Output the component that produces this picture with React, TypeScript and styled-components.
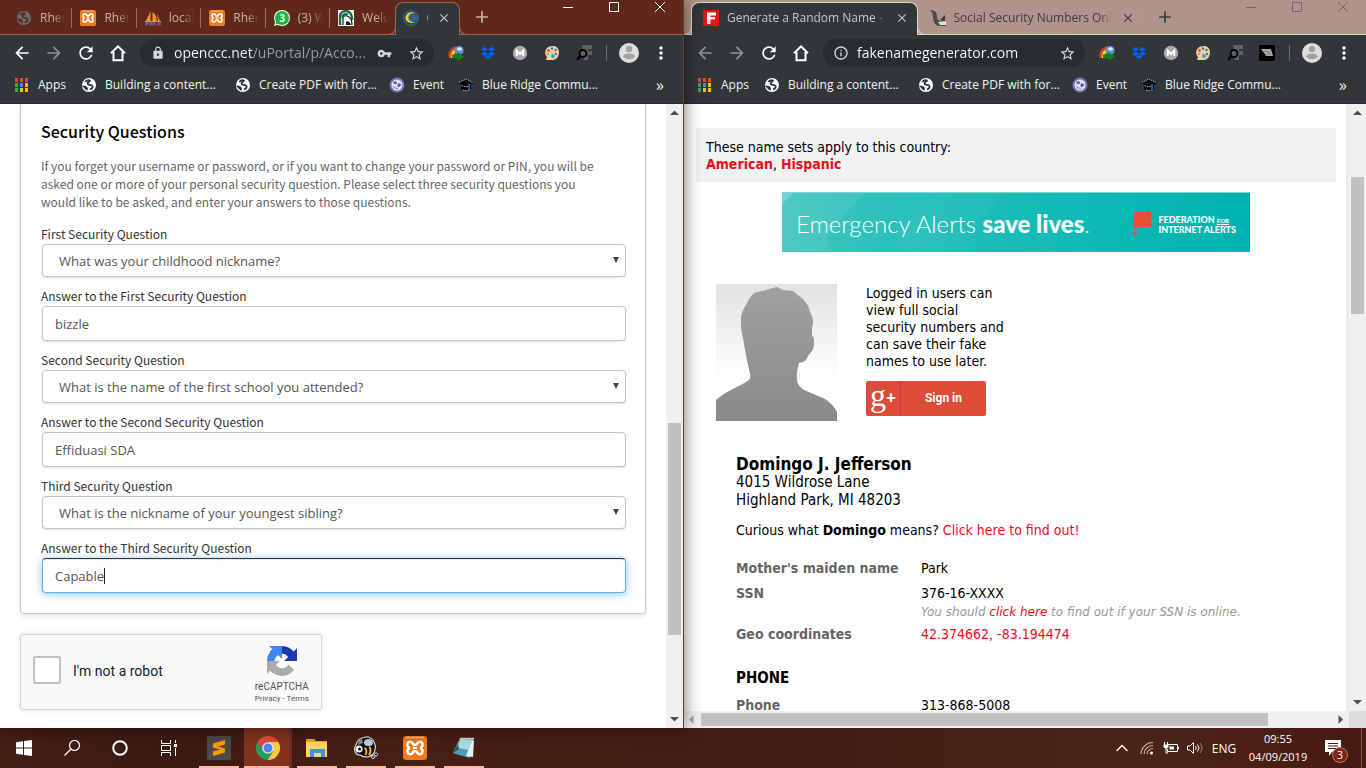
import React, { ReactNode, useId } from "react";
import styled, { createGlobalStyle, css } from "styled-components";
import {
  MdAdd,
  MdArrowBack,
  MdArrowForward,
  MdClose,
  MdInfoOutline,
  MdLock,
  MdMoreVert,
  MdRefresh,
  MdStarBorder,
  MdVpnKey,
} from "react-icons/md";
import { FaDropbox } from "react-icons/fa";

const ui = `"Open Sans", "Noto Sans", sans-serif`;
const source = `"Noto Sans CJK SC", "Noto Sans", sans-serif`;
const tahoma = `"DejaVu Sans Condensed", "DejaVu Sans", sans-serif`;
const toolbarColor = "#323639";

const GlobalStyle = createGlobalStyle`
  *, *::before, *::after { box-sizing: border-box; }
  body { margin: 0; background: #fff; overflow: hidden; }
  button, input, select { font: inherit; color: inherit; margin: 0; padding: 0; border: 0; background: none; outline: 0; }
  a { color: inherit; text-decoration: none; }
  h1, h2, h3, p, dl, dd { margin: 0; }
  svg { display: block; flex: none; }
`;

/* ---------- desktop and windows ---------- */

const Desktop = styled.div`
  height: 100vh;
  display: flex;
  flex-direction: column;
  font-family: ${ui};
`;

const Windows = styled.div`
  flex: 1;
  min-height: 0;
  display: grid;
  grid-template-columns: minmax(0, 684fr) minmax(0, 682fr);
`;

const Window = styled.section<{ $front?: boolean }>`
  display: flex;
  flex-direction: column;
  min-width: 0;
  min-height: 0;
  background: #fff;
  ${(p) =>
    p.$front &&
    css`
      position: relative;
      z-index: 1;
      border-right: 1px solid #6b3a2e;
      box-shadow: 0 0 16px rgba(0, 0, 0, 0.55);
    `}
`;

const TabStrip = styled.div<{ $front?: boolean }>`
  display: flex;
  align-items: flex-start;
  height: 35px;
  flex: none;
  padding-left: ${(p) => (p.$front ? 8 : 7)}px;
  background: ${(p) => (p.$front ? "#5f281a" : "#b0948b")};
  border-bottom: 1px solid ${(p) => (p.$front ? "#96685b" : "#e0d3cf")};
  color: ${(p) => (p.$front ? "#c9b3ac" : "#3c3c3e")};
  --line: ${(p) => (p.$front ? "#96685b" : "#e0d3cf")};
  --inset: ${(p) => (p.$front ? 8 : 12)}px;
`;

const TabList = styled.div`
  flex: 0 1 452px;
  display: flex;
  min-width: 0;
`;

const Tab = styled.div<{ $active?: boolean; $last?: boolean }>`
  position: relative;
  flex: 1 1 0;
  min-width: 0;
  display: flex;
  align-items: center;
  gap: 8px;
  height: 33px;
  margin-top: 2px;
  padding: 0 7px 2px var(--inset);
  font-size: 12px;
  ${(p) =>
    p.$active
      ? css`
          padding: 0 7px 2px calc(var(--inset) - 1px);
          background: ${toolbarColor};
          border: 1px solid var(--line);
          border-bottom: 0;
          border-radius: 8px 8px 0 0;
          color: #c4c7ca;
          &::before,
          &::after {
            content: "";
            position: absolute;
            bottom: 0;
            width: 8px;
            height: 8px;
            border-bottom: 1px solid var(--line);
          }
          &::before {
            left: -8px;
            border-right: 1px solid var(--line);
            border-bottom-right-radius: 8px;
          }
          &::after {
            right: -8px;
            border-left: 1px solid var(--line);
            border-bottom-left-radius: 8px;
          }
        `
      : css`
          &::after {
            content: "";
            position: absolute;
            right: 0;
            top: 6px;
            height: 20px;
            border-right: ${p.$last ? 0 : 1}px solid rgba(190, 150, 138, 0.6);
          }
        `}
`;

const TabTitle = styled.button<{ $short?: boolean }>`
  flex: 1;
  min-width: 0;
  overflow: hidden;
  white-space: nowrap;
  text-align: left;
  line-height: 18px;
  ${(p) =>
    !p.$short &&
    css`
      -webkit-mask-image: linear-gradient(90deg, #000 calc(100% - 12px), transparent);
      mask-image: linear-gradient(90deg, #000 calc(100% - 12px), transparent);
    `}
`;

const IconButton = styled.button<{ $w?: number; $h?: number; $dim?: boolean }>`
  display: flex;
  align-items: center;
  justify-content: center;
  flex: none;
  width: ${(p) => p.$w ?? 32}px;
  height: ${(p) => p.$h ?? 28}px;
  opacity: ${(p) => (p.$dim ? 0.45 : 1)};
`;

const Divider = styled.span`
  flex: none;
  width: 1px;
  height: 16px;
  background: #6b6f73;
  margin: 0 6px;
`;

const WindowControls = styled.div<{ $front?: boolean }>`
  display: flex;
  margin-left: auto;
  color: ${(p) => (p.$front ? "#fff" : "#7a6660")};
`;

const Toolbar = styled.div<{ $front?: boolean }>`
  flex: none;
  display: flex;
  align-items: center;
  height: 36px;
  padding: 0 6px 0 ${(p) => (p.$front ? 6 : 5)}px;
  background: ${toolbarColor};
  color: #fff;
`;

const Omnibox = styled.div`
  flex: 1;
  min-width: 0;
  display: flex;
  align-items: center;
  height: 28px;
  margin: 0 6px;
  padding: 0 2px 0 8px;
  border-radius: 14px;
  background: #282c2f;
  color: #d5d8db;
`;

const AddressInput = styled.input<{ $host: number }>`
  flex: 1;
  min-width: 0;
  margin-left: 6px;
  font-size: 14px;
  line-height: 20px;
  color: transparent;
  background: linear-gradient(90deg, #fff ${(p) => p.$host}px, #9aa0a6 ${(p) => p.$host}px);
  -webkit-background-clip: text;
  background-clip: text;
`;

const BookmarkBar = styled.nav<{ $front?: boolean }>`
  flex: none;
  display: flex;
  align-items: center;
  height: 33px;
  padding: 0 14px 5px ${(p) => (p.$front ? 14 : 13)}px;
  background: ${toolbarColor};
  border-bottom: 1px solid #26282b;
  color: #f1f3f4;
  font-size: 12px;
`;

const Bookmark = styled.a<{ $w: number }>`
  flex: 0 1 ${(p) => p.$w}px;
  display: flex;
  align-items: center;
  gap: 8px;
  white-space: nowrap;
  line-height: 18px;
`;

const Viewport = styled.div`
  flex: 1;
  min-height: 0;
  display: flex;
`;

/* ---------- scroll bars ---------- */

const Track = styled.div<{ $row?: boolean }>`
  flex: none;
  display: flex;
  flex-direction: ${(p) => (p.$row ? "row" : "column")};
  ${(p) => (p.$row ? "height: 17px;" : "width: 17px;")}
  background: #f0f0f0;
  color: #505050;
`;

const Space = styled.span<{ $n: number; $thumb?: boolean; $row?: boolean }>`
  flex: ${(p) => p.$n} 1 0;
  ${(p) =>
    p.$thumb &&
    css`
      background: #c1c1c1;
      margin: ${p.$row ? "2px 0" : "0 2px"};
    `}
`;

const arrows = {
  up: "M4 11h9L8.500 6.500z",
  down: "M4 6h9l-4.500 4.500z",
  left: "M9.500 4v9L5 8.500z",
  right: "M6.500 4v9L11 8.500z",
};

function Arrow({ dir }: { dir: keyof typeof arrows }) {
  return (
    <IconButton $w={17} $h={17} aria-label={`Scroll ${dir}`} $dim={dir === "left"}>
      <svg width="17" height="17">
        <path d={arrows[dir]} fill="currentColor" />
      </svg>
    </IconButton>
  );
}

function ScrollBar({ parts, row }: { parts: [number, number, number]; row?: boolean }) {
  return (
    <Track $row={row}>
      <Arrow dir={row ? "left" : "up"} />
      <Space $n={parts[0]} />
      <Space $n={parts[1]} $thumb $row={row} />
      <Space $n={parts[2]} />
      <Arrow dir={row ? "right" : "down"} />
    </Track>
  );
}

/* ---------- icons ---------- */

const Globe = ({ color = "#fff", ink = toolbarColor }) => (
  <svg width="16" height="16" viewBox="0 0 16 16">
    <circle cx="8" cy="8" r="7" fill={color} />
    <path
      d="M4.200 5C5.500 3.500 7.500 3 9 3.500 8.500 5 6.500 5 6.500 6.500S9 7.500 11 8.500c1.500 1 .500 3-2 4"
      fill="none"
      stroke={ink}
      strokeWidth="1.800"
    />
    <path d="M1.500 8.500L5 9l2 2-.500 2.500-1.500 1C3 13.500 1.500 11.500 1.500 8.500z" fill={ink} />
    <path d="M2 10.500a6.600 6.600 0 0 0 4 3.800" fill="none" stroke={color} strokeWidth="1.400" />
  </svg>
);

const Xampp = ({ size = 16 }) => (
  <svg width={size} height={size} viewBox="0 0 24 24">
    <rect width="24" height="24" rx="3" fill="#f07a1f" />
    <path d="M3 1.500h18" stroke="#f9b27a" strokeWidth="1.500" />
    <path
      d="M9 6.500C6 4.500 4 7 4.500 9.500c.300 1.200 1.500 1.500 1.500 2.500s-1.500 1.500-1.500 3C4.500 18 7 19 9 17.500c1-.900 1-2.500 3-2.500s2 1.600 3 2.500c2 1.500 4.500.500 4.500-2.500 0-1.500-1.500-2-1.500-3s1.200-1.300 1.500-2.500C20 7 18 4.500 15 6.500c-1 .900-1 2.500-3 2.500s-2-1.600-3-2.500z"
      fill="none"
      stroke="#fff"
      strokeWidth="2.600"
    />
    <path d="M10 12h4" stroke="#fff" strokeWidth="2" />
  </svg>
);

const PhpMyAdmin = () => (
  <svg width="16" height="16" viewBox="0 0 16 16">
    <path d="M5.500 1L1 11h4.500zM7.500 2v9h4c.300-4-1-7-4-9zM12 4l3 7h-2z" fill="#f5921e" />
    <path d="M0 11.500h16" stroke="#e8b98a" strokeWidth=".800" />
    <path d="M1 15.500V12h2v2H1m4 1.500V12m0 2h2m0-2v3.500M9 12v3.500M9 14h2m2-2v3.500m2-3.500v3.500" fill="none" stroke="#7f79b5" />
  </svg>
);

const WhatsApp = () => (
  <svg width="16" height="16" viewBox="0 0 16 16">
    <circle cx="8" cy="8" r="8" fill="#fff" />
    <path d="M0 16l1.500-5L5 14.500z" fill="#fff" />
    <circle cx="8" cy="8" r="7" fill="#12b83f" />
    <path d="M1.500 14.500l1-4 3 3z" fill="#12b83f" />
    <text x="8" y="11.500" textAnchor="middle" fontSize="10" fontWeight="700" fill="#fff">
      3
    </text>
  </svg>
);

const Portal = () => (
  <svg width="16" height="16" viewBox="0 0 16 16">
    <rect width="16" height="16" fill="#fff" />
    <path d="M2 15V6c0-3 3-5 6-5 4 0 6 4 6 8v1" fill="none" stroke="#1d6b4e" strokeWidth="2.400" />
    <path d="M5 15V8c0-2 2-3 4-2 3 1 5 4 5 9" fill="none" stroke="#151515" strokeWidth="1.200" />
    <path d="M3 6c2-3 5-4 8-2L8 6C6 6 5 7 4.500 9z" fill="#1d6b4e" />
    <path d="M8 15v-3c2-2 4 0 5 3z" fill="#111" />
  </svg>
);

const CccLogo = () => (
  <svg width="16" height="16" viewBox="0 0 16 16">
    <circle cx="8" cy="8" r="7.500" fill="#1c4a70" stroke="#2c6f8f" />
    <path d="M6.500 6h8M6 8h9M7 10h7" stroke="#5e8fb5" strokeWidth=".800" />
    <path d="M12.500 4C9.500 1 3.500 2 2.500 7c-.500 5 5 7.500 10 5-4 .500-7-1.500-7-4.500 0-3 3-4.800 7-3.500z" fill="#f5cf1c" />
  </svg>
);

const FngLogo = () => (
  <svg width="16" height="16" viewBox="0 0 16 16">
    <rect width="16" height="16" fill="#ed1010" />
    <path d="M4 2.500h9v3H7.500V7H12v2.500H7.500V14H4z" fill="#fff" />
  </svg>
);

const EagleLogo = () => (
  <svg width="16" height="16" viewBox="0 0 16 16">
    <path d="M0 0c4 0 7 2 7 6 0 3 1 4 3 5l6-1v6H8C4 14 3 10 3 7 3 4 2 2 0 0z" fill="#4c4c50" />
    <path d="M10 10l5-5v5l-2 1z" fill="#3a3a3e" />
    <path d="M8 12l8-1v4h-6z" fill="#e4dcda" />
  </svg>
);

const HomeIcon = () => (
  <svg width="18" height="18" viewBox="0 0 18 18">
    <path d="M4.500 8v8.200h9V8M2 9.300L9 2.400l7 6.900" fill="none" stroke="#fff" strokeWidth="2" />
  </svg>
);

const IdmIcon = () => (
  <svg width="16" height="16" viewBox="0 0 16 16">
    <path d="M1 13C-1 8 2 3 8 1v4.500C5 6.500 4 9 4.500 13z" fill="#d93a22" />
    <path d="M3 13C2 9 4 5 8.500 4V7.500C6 8.500 5.500 10 6 13z" fill="#f6d322" />
    <circle cx="11" cy="5.500" r="4.600" fill="#5b93da" />
    <ellipse cx="11.500" cy="4" rx="2.500" ry="1.800" fill="#d8ecff" />
    <path d="M3.500 9.500H9V7l7 4.500-6.500 4.500v-2.500h-5z" fill="#167d1c" />
  </svg>
);

const MIcon = () => (
  <svg width="16" height="16" viewBox="0 0 16 16">
    <circle cx="8" cy="8" r="7.200" fill="#a9a9a9" />
    <path d="M4.700 11V5.500L8 9l3.300-3.500V11" fill="none" stroke="#fff" strokeWidth="2" />
  </svg>
);

const PaletteIcon = () => (
  <svg width="16" height="16" viewBox="0 0 16 16">
    <path d="M8 1C12 .500 15 3 15 7.500S12 15 9 15H2l1-3C1.500 10.500 1 9 1.200 7 1.500 3.500 4.500 1.300 8 1z" fill="#ecd0a6" />
    <circle cx="4.500" cy="5.500" r="1.300" fill="#d13b2e" />
    <circle cx="8" cy="3.500" r="1.200" fill="#3d68c9" />
    <circle cx="11.500" cy="5" r="1.300" fill="#3a9a49" />
    <circle cx="12" cy="9" r="1.200" fill="#9a4eb2" />
    <circle cx="9" cy="11" r="2" fill="#1fb0d8" />
    <circle cx="4" cy="9" r="1.200" fill="#f0922d" />
  </svg>
);

const LensIcon = () => (
  <svg width="18" height="16" viewBox="0 0 18 16">
    <path d="M7 0h10v4h-4v2h4v4h-4v5H9z" fill="#606264" />
    <circle cx="8" cy="8.500" r="3.500" fill="#606264" stroke="#050505" strokeWidth="2" />
    <path d="M5.500 11L2 15" stroke="#050505" strokeWidth="2.400" />
  </svg>
);

const EagleTile = () => (
  <svg width="16" height="16" viewBox="0 0 16 16">
    <rect width="16" height="16" rx="1" fill="#000" />
    <path d="M2 4h10l2 7H7L5 8z" fill="#a6a6a6" />
    <path d="M4 6l7 1.500M7 9l5 .500" stroke="#777" strokeWidth=".700" />
  </svg>
);

const Profile = () => (
  <svg width="20" height="20" viewBox="0 0 20 20">
    <circle cx="10" cy="10" r="10" fill="#dedede" />
    <circle cx="10" cy="6" r="3.200" fill="#a2a2a2" />
    <ellipse cx="10" cy="13.300" rx="5.800" ry="2.900" fill="#a2a2a2" />
  </svg>
);

const appColors = ["#ea4335", "#ea4335", "#ea4335", "#34a853", "#4285f4", "#fbbc04", "#34a853", "#fbbc04", "#fbbc04"];
const AppsIcon = () => (
  <svg width="16" height="16" viewBox="0 0 16 16">
    {appColors.map((c, i) => (
      <rect key={i} x={1 + (i % 3) * 5} y={1 + Math.floor(i / 3) * 5} width="3" height="4" fill={c} />
    ))}
  </svg>
);

const EventIcon = () => (
  <svg width="16" height="16" viewBox="0 0 16 16">
    <circle cx="8" cy="8" r="6.500" fill="#e4e2f4" stroke="#7673bd" strokeWidth="2" />
    <path d="M4 5.500l3-1 1 1.500-2 1zM9.500 6.500l2.500 1-2 2.500-1.500-1z" fill="#5552a0" stroke="#5552a0" strokeWidth=".600" />
    <path d="M4 9l2 2 3 .500" stroke="#7673bd" fill="none" />
  </svg>
);

const CapIcon = () => (
  <svg width="16" height="16" viewBox="0 0 16 16">
    <path d="M8 2l8 4-3 1.600V12c-3 2-7 2-10 0V7.600L0 6z" fill="#050505" />
    <path d="M1 5.500L8 2l7 3.500M3.500 8.500C6 10 9 10 11 9M5 13c2 1 4 1 6 0" fill="none" stroke="#e8e8e8" strokeDasharray="1.500 1" strokeWidth=".800" />
    <path d="M11 7v7" stroke="#1a72bd" strokeWidth="1.600" />
  </svg>
);

/* ---------- browser chrome ---------- */

type TabInfo = { title: string; icon: ReactNode; active?: boolean; closable?: boolean };

function Tabs({ tabs, front }: { tabs: TabInfo[]; front?: boolean }) {
  return (
    <TabStrip $front={front}>
      <TabList>
        {tabs.map((t, i) => (
          <Tab key={i} $active={t.active} $last={tabs[i + 1]?.active}>
            {t.icon}
            <TabTitle $short={t.title.length < 2}>{t.title}</TabTitle>
            {t.closable && (
              <IconButton $w={16} $h={16} aria-label="Close tab">
                <MdClose size={14} />
              </IconButton>
            )}
          </Tab>
        ))}
      </TabList>
      <IconButton $w={44} $h={34} aria-label="New tab">
        <MdAdd size={20} />
      </IconButton>
      <WindowControls $front={front}>
        <IconButton $w={46} $h={14} aria-label="Minimize">
          <svg width="10" height="10">
            <path d="M0 5.500h10" stroke="currentColor" />
          </svg>
        </IconButton>
        <IconButton $w={46} $h={14} aria-label="Maximize">
          <svg width="10" height="10">
            <path d="M.500 .500h9v9h-9z" stroke="currentColor" fill="none" />
          </svg>
        </IconButton>
        <IconButton $w={46} $h={14} aria-label="Close">
          <svg width="10" height="10">
            <path d="M0 0l10 10M10 0L0 10" stroke="currentColor" />
          </svg>
        </IconButton>
      </WindowControls>
    </TabStrip>
  );
}

function Nav({ front, url, host }: { front?: boolean; url: string; host: number }) {
  return (
    <Toolbar $front={front}>
      <IconButton aria-label="Back" $dim={!front}>
        <MdArrowBack size={20} />
      </IconButton>
      <IconButton aria-label="Forward" $dim>
        <MdArrowForward size={20} />
      </IconButton>
      <IconButton aria-label="Reload">
        <MdRefresh size={20} />
      </IconButton>
      <IconButton aria-label="Home">
        <HomeIcon />
      </IconButton>
      <Omnibox>
        <IconButton $w={20} aria-label="Site information">
          {front ? <MdLock size={14} /> : <MdInfoOutline size={16} />}
        </IconButton>
        <AddressInput aria-label="Address" defaultValue={url} $host={host} />
        {front && (
          <IconButton aria-label="Saved password">
            <MdVpnKey size={15} />
          </IconButton>
        )}
        <IconButton aria-label="Bookmark this page">
          <MdStarBorder size={17} />
        </IconButton>
      </Omnibox>
      <IconButton aria-label="Download manager">
        <IdmIcon />
      </IconButton>
      <IconButton aria-label="Dropbox">
        <FaDropbox size={14} color="#0061fe" />
      </IconButton>
      <IconButton aria-label="Mail">
        <MIcon />
      </IconButton>
      <IconButton aria-label="Palette">
        <PaletteIcon />
      </IconButton>
      <IconButton aria-label="Finder">
        <LensIcon />
      </IconButton>
      {!front && (
        <IconButton aria-label="Eagle">
          <EagleTile />
        </IconButton>
      )}
      <Divider />
      <IconButton aria-label="Profile">
        <Profile />
      </IconButton>
      <IconButton aria-label="Menu">
        <MdMoreVert size={20} />
      </IconButton>
    </Toolbar>
  );
}

const Overflow = styled.button`
  margin-left: auto;
  width: 18px;
  font-size: 16px;
  line-height: 18px;
`;

function Bookmarks({ front }: { front?: boolean }) {
  return (
    <BookmarkBar $front={front} aria-label="Bookmarks">
      <Bookmark href="#" $w={67}>
        <AppsIcon />
        Apps
      </Bookmark>
      <Bookmark href="#" $w={154}>
        <Globe />
        Building a content...
      </Bookmark>
      <Bookmark href="#" $w={154}>
        <Globe />
        Create PDF with for...
      </Bookmark>
      <Bookmark href="#" $w={69}>
        <EventIcon />
        Event
      </Bookmark>
      <Bookmark href="#" $w={150}>
        <CapIcon />
        Blue Ridge Commu...
      </Bookmark>
      <Overflow aria-label="More bookmarks">»</Overflow>
    </BookmarkBar>
  );
}

/* ---------- account form page ---------- */

const FormPage = styled.main`
  flex: 1;
  min-width: 0;
  overflow: hidden;
  padding: 0 20px;
  font-family: ${source};
`;

const Card = styled.form`
  padding: 15px 19px 20px 20px;
  border: 1px solid #c8c8c8;
  border-top: 0;
  border-radius: 0 0 4px 4px;
  box-shadow: 0 2px 4px rgba(0, 0, 0, 0.12);
`;

const CardTitle = styled.h1`
  font-size: 16px;
  font-weight: 500;
  line-height: 24px;
  color: #000;
`;

const Intro = styled.p`
  margin: 14px 0 14px;
  font-size: 12px;
  line-height: 18px;
  color: #666;
`;

const Field = styled.div`
  & + & {
    margin-top: 10px;
  }
`;

const Label = styled.label`
  display: block;
  margin-bottom: 1px;
  font-size: 12px;
  line-height: 18px;
  color: #333;
`;

const boxStyle = css`
  width: 100%;
  border: 1px solid #c4c4c4;
  border-radius: 4px;
  box-shadow: 0 1px 2px rgba(0, 0, 0, 0.12);
  background: #fff;
  font-family: ${ui};
  font-size: 13px;
  color: #555;
`;

const SelectWrap = styled.div`
  position: relative;
  padding-left: 1px;
  &::after {
    content: "";
    position: absolute;
    right: 7px;
    top: 13px;
    border: 3px solid transparent;
    border-top: 6px solid #444;
    border-bottom: 0;
    pointer-events: none;
  }
`;

const Select = styled.select`
  ${boxStyle}
  display: block;
  height: 33px;
  padding: 0 16px;
  appearance: none;
`;

const TextBox = styled.div<{ $focus?: boolean }>`
  ${boxStyle}
  width: auto;
  margin-left: 1px;
  display: flex;
  align-items: center;
  height: 35px;
  padding: 0 12px;
  ${(p) =>
    p.$focus &&
    css`
      border-color: #333 #66afe9 #66afe9;
      box-shadow: 0 1px 8px rgba(82, 168, 236, 0.7), inset 0 1px 1px rgba(0, 0, 0, 0.1);
    `}
`;

const Answer = styled.input<{ $hug?: boolean }>`
  ${(p) => (p.$hug ? "field-sizing: content; caret-color: transparent;" : "flex: 1;")}
  min-width: 0;
  line-height: 20px;
`;

const Caret = styled.span`
  width: 1px;
  height: 16px;
  background: #222;
`;

function Question({ label, value }: { label: string; value: string }) {
  const id = useId();
  return (
    <Field>
      <Label htmlFor={id}>{label}</Label>
      <SelectWrap>
        <Select id={id}>
          <option>{value}</option>
        </Select>
      </SelectWrap>
    </Field>
  );
}

function AnswerField({ label, value, focus }: { label: string; value: string; focus?: boolean }) {
  const id = useId();
  return (
    <Field>
      <Label htmlFor={id}>{label}</Label>
      <TextBox $focus={focus}>
        <Answer id={id} defaultValue={value} $hug={focus} />
        {focus && <Caret />}
      </TextBox>
    </Field>
  );
}

const Captcha = styled.div`
  display: flex;
  align-items: center;
  width: 302px;
  height: 76px;
  margin-top: 20px;
  padding: 0 12px;
  border: 1px solid #d3d3d3;
  border-radius: 3px;
  background: #f9f9f9;
  box-shadow: 0 0 4px 1px rgba(0, 0, 0, 0.08);
  font-family: Roboto, sans-serif;
`;

const CaptchaCheck = styled.input`
  appearance: none;
  width: 28px;
  height: 28px;
  && {
    margin-bottom: 4px;
    border: 2px solid #c1c1c1;
    border-radius: 2px;
    background: #fff;
  }
`;

const CaptchaLabel = styled.label`
  margin: 0 0 2px 12px;
  font-size: 14px;
  line-height: 17px;
  color: #222;
`;

const CaptchaBrand = styled.div`
  display: flex;
  flex-direction: column;
  align-items: center;
  margin-left: auto;
  padding-top: 6px;
  font-size: 8px;
  line-height: 12px;
  color: #555;
`;

const BrandName = styled.span`
  margin-top: 4px;
  font-size: 10px;
  line-height: 13px;
`;

function AccountPage() {
  return (
    <FormPage>
      <Card>
        <CardTitle>Security Questions</CardTitle>
        <Intro>
          If you forget your username or password, or if you want to change your password or PIN, you will be
          <br />
          asked one or more of your personal security question. Please select three security questions you
          <br />
          would like to be asked, and enter your answers to those questions.
        </Intro>
        <Question label="First Security Question" value="What was your childhood nickname?" />
        <AnswerField label="Answer to the First Security Question" value="bizzle" />
        <Question label="Second Security Question" value="What is the name of the first school you attended?" />
        <AnswerField label="Answer to the Second Security Question" value="Effiduasi SDA" />
        <Question label="Third Security Question" value="What is the nickname of your youngest sibling?" />
        <AnswerField label="Answer to the Third Security Question" value="Capable" focus />
      </Card>
      <Captcha>
        <CaptchaCheck type="checkbox" id="robot" />
        <CaptchaLabel htmlFor="robot">I'm not a robot</CaptchaLabel>
        <CaptchaBrand>
          <svg width="30" height="30" viewBox="0 0 64 64">
            <path
              fill="#1c3aa9"
              d="M64 31.955l-.033-1.370V4.687l-7.160 7.160C50.948 4.674 42.033.093 32.050.093c-10.400 0-19.622 4.960-25.458 12.640l11.736 11.860a15.550 15.550 0 0 1 4.754-5.334c2.050-1.600 4.952-2.906 8.968-2.906.485 0 .860.057 1.135.163 4.976.393 9.288 3.140 11.828 7.124l-8.307 8.307L64 31.953"
            />
            <path
              fill="#4285f4"
              d="M31.862.094l-1.370.033H4.594l7.160 7.160C4.580 13.147 0 22.060 0 32.046c0 10.400 4.960 19.622 12.640 25.458L24.500 45.768a15.550 15.550 0 0 1-5.334-4.754c-1.600-2.050-2.906-4.952-2.906-8.968 0-.485.057-.860.163-1.135.393-4.976 3.140-9.288 7.124-11.828l8.307 8.307L31.860.095"
            />
            <path
              fill="#ababab"
              d="M.001 32.045l.033 1.370v25.898l7.160-7.160c5.860 7.173 14.774 11.754 24.760 11.754 10.400 0 19.622-4.960 25.458-12.640l-11.736-11.860a15.550 15.550 0 0 1-4.754 5.334c-2.050 1.600-4.952 2.906-8.968 2.906-.485 0-.860-.057-1.135-.163-4.976-.393-9.288-3.140-11.828-7.124l8.307-8.307c-10.522.040-22.400.066-27.295-.005"
            />
          </svg>
          <BrandName>reCAPTCHA</BrandName>
          <span>
            <a href="#">Privacy</a> - <a href="#">Terms</a>
          </span>
        </CaptchaBrand>
      </Captcha>
    </FormPage>
  );
}

/* ---------- fake name page ---------- */

const NamePane = styled.div`
  flex: 1;
  min-width: 0;
  min-height: 0;
  display: flex;
  flex-direction: column;
`;

const NamePage = styled.main`
  flex: 1;
  min-height: 0;
  overflow: hidden;
  padding: 24px 10px 0 12px;
  border-right: 3px solid #ececec;
  font-family: ${tahoma};
  font-size: 14px;
  line-height: 17px;
  color: #000;
`;

const SetsBox = styled.p`
  padding: 11px 10px 9px;
  background: #f2f2f2;
`;

const RedLink = styled.a`
  color: #ed0c1c;
`;

const Banner = styled.a`
  position: relative;
  display: flex;
  align-items: center;
  width: 468px;
  max-width: 100%;
  height: 60px;
  margin: 10px auto 0;
  padding: 4px 14px 0;
  overflow: hidden;
  background: linear-gradient(90deg, #4fc9c3, #14bcb8 60%, #00b4b0);
  color: #fff;
  font-family: Lato, sans-serif;
`;

const BannerWaves = styled.svg`
  position: absolute;
  inset: 0;
`;

const BannerText = styled.span`
  position: relative;
  font-size: 24px;
  font-weight: 300;
  line-height: 30px;
  white-space: nowrap;
  b {
    font-weight: 900;
  }
`;

const Federation = styled.span`
  position: relative;
  display: flex;
  align-items: center;
  gap: 7px;
  margin-left: auto;
  font-size: 9px;
  font-weight: 900;
  line-height: 9px;
  white-space: nowrap;
  small {
    font-size: 6px;
    text-decoration: underline;
  }
`;

const LoginRow = styled.div`
  display: flex;
  gap: 29px;
  margin: 32px 20px 0;
`;

const LoginText = styled.div`
  width: 140px;
  padding-top: 1px;
`;

const SignIn = styled.button`
  display: flex;
  align-items: stretch;
  width: 120px;
  height: 35px;
  overflow: hidden;
  && {
    margin-top: 11px;
    background: #dd4b39;
    border-radius: 2px;
    color: #fff;
    font: 700 12px/35px Roboto, sans-serif;
  }
`;

const GPlus = styled.span`
  display: flex;
  align-items: center;
  justify-content: center;
  width: 35px;
  border-right: 1px solid #c53f2f;
  font: 400 32px/26px "Liberation Serif", serif;
  padding-bottom: 8px;
  b {
    padding-top: 6px;
    font: 700 17px/20px "Liberation Sans", sans-serif;
  }
`;

const SignInText = styled.span`
  flex: 1;
`;

const Identity = styled.div`
  margin: 34px 40px 0;
`;

const FullName = styled.h2`
  font-size: 17px;
  line-height: 18px;
`;

const Address = styled.p`
  font-size: 15px;
  line-height: 18px;
`;

const Curious = styled.p`
  margin: 13px 0 21px;
`;

const Facts = styled.dl`
  display: grid;
  grid-template-columns: 185px 1fr;
  row-gap: 8px;
  dt {
    font-weight: 700;
    color: #666;
  }
`;

const Note = styled.p`
  margin-bottom: -4px;
  font: italic 12px/20px "DejaVu Sans", sans-serif;
  color: #999;
`;

const SectionTitle = styled.h3`
  margin: 27px 0 10px;
  font-size: 15px;
  line-height: 17px;
`;

function FakeNamePage() {
  return (
    <NamePage>
      <SetsBox>
        These name sets apply to this country:
        <br />
        <b>
          <RedLink href="#">American</RedLink>
        </b>
        ,{" "}
        <b>
          <RedLink href="#">Hispanic</RedLink>
        </b>
      </SetsBox>
      <Banner href="#">
        <BannerWaves width="468" height="60" viewBox="0 0 468 60">
          <path d="M0 0h12L0 12z" fill="#fff" opacity=".2" />
          {[0, 70, 140, 210, 280, 350, 420].map((x) => (
            <path
              key={x}
              d={`M${x + 84} 0L${x + 48} 38Q${x + 40} 50 ${x + 52} 60H${x + 122}Q${x + 110} 50 ${x + 118} 38L${x + 154} 0z`}
              fill="#00b2ae"
              opacity={x % 140 ? 0.08 : 0.2}
            />
          ))}
          <path d="M0 .500h468" stroke="#7fd6d2" />
        </BannerWaves>
        <BannerText>
          Emergency Alerts <b>save lives</b>.
        </BannerText>
        <Federation>
          <svg width="18" height="26" viewBox="0 0 18 26">
            <path d="M2 1h15a1 1 0 0 1 1 1v13a1 1 0 0 1-1 1H5l-4 3V2a1 1 0 0 1 1-1z" fill="#e8502f" />
            <circle cx="2" cy="23" r="2" fill="#e8502f" />
          </svg>
          <span>
            FEDERATION <small>FOR</small>
            <br />
            INTERNET ALERTS
          </span>
        </Federation>
      </Banner>
      <LoginRow>
        <svg width="121" height="137" viewBox="0 0 121 137" role="img" aria-label="Silhouette">
          <defs>
            <linearGradient id="sky" x2="0" y2="1">
              <stop stopColor="#e2e2e2" />
              <stop offset=".700" stopColor="#fff" />
            </linearGradient>
            <linearGradient id="man" x2="0" y2="1">
              <stop stopColor="#a0a0a0" />
              <stop offset="1" stopColor="#8a8a8a" />
            </linearGradient>
          </defs>
          <rect width="121" height="137" fill="url(#sky)" />
          <path
            d="M0 137V116C10 107 20 104 30 98 34 96 35 94 34 89 31 78 29 66 27 54 25 46 25 42 25 36 25 29 28 24 31 19 34 13 37 9 41 8L47 7 53 5 61 3 67 6 77 7 83 12C89 16 93 22 94 28 97 34 98 38 96 44L96 52C98 52 98 55 98 59 98 66 95 68 92 72 90 77 88 78 83 79 82 84 80 89 81 95 81 100 84 103 88 106 94 109 101 111 107 114 113 117 118 122 121 128V137z"
            fill="url(#man)"
          />
        </svg>
        <LoginText>
          <p>Logged in users can view full social security numbers and can save their fake names to use later.</p>
          <SignIn>
            <GPlus>
              g<b>+</b>
            </GPlus>
            <SignInText>Sign in</SignInText>
          </SignIn>
        </LoginText>
      </LoginRow>
      <Identity>
        <FullName>Domingo J. Jefferson</FullName>
        <Address>
          4015 Wildrose Lane
          <br />
          Highland Park, MI 48203
        </Address>
        <Curious>
          Curious what <b>Domingo</b> means? <RedLink href="#">Click here to find out!</RedLink>
        </Curious>
        <Facts>
          <dt>Mother's maiden name</dt>
          <dd>Park</dd>
          <dt>SSN</dt>
          <dd>
            376-16-XXXX
            <Note>
              You should <RedLink href="#">click here</RedLink> to find out if your SSN is online.
            </Note>
          </dd>
          <dt>Geo coordinates</dt>
          <dd>
            <RedLink href="#">42.374662, -83.194474</RedLink>
          </dd>
        </Facts>
        <SectionTitle>PHONE</SectionTitle>
        <Facts>
          <dt>Phone</dt>
          <dd>313-868-5008</dd>
        </Facts>
      </Identity>
    </NamePage>
  );
}

const SideColumn = styled.div`
  display: flex;
  flex-direction: column;
`;

const SideCorner = styled.span`
  height: 17px;
  background: #dcdcdc;
`;

const SideTrack = styled.div`
  flex: 1;
  display: flex;
`;

/* ---------- taskbar ---------- */

const Taskbar = styled.footer`
  flex: none;
  display: flex;
  height: 40px;
  background: linear-gradient(90deg, #451e14, #3c1a11 12%, #471f15 28%, #421c13 60%, #4c2317 85%, #451b10);
  color: #fff;
`;

const TaskButton = styled.button<{ $open?: boolean; $active?: boolean }>`
  display: flex;
  align-items: center;
  justify-content: center;
  width: 48px;
  ${(p) =>
    p.$open &&
    css`
      && {
        margin-left: 1px;
        background: linear-gradient(#fbb9a8, #fbb9a8) bottom / ${p.$active ? 48 : 40}px 2px no-repeat
          ${p.$active ? ", #83321d" : ""};
      }
      ${p.$active && "box-shadow: inset -3px 0 0 #6c3325;"}
    `}
`;

const OpenApps = styled.div`
  display: flex;
  margin-left: 2px;
`;

const Tray = styled.div`
  display: flex;
  align-items: center;
  margin-left: auto;
  padding-right: 4px;
  font-size: 12px;
`;

const Clock = styled.time`
  width: 72px;
  margin: 0 2px 0 1px;
  font-size: 11px;
  line-height: 18px;
  text-align: center;
`;

const Notices = styled.button`
  position: relative;
  display: flex;
  align-items: center;
  justify-content: center;
  width: 34px;
  height: 40px;
  && {
    margin-right: 11px;
  }
`;

const Count = styled.span`
  position: absolute;
  right: 2px;
  bottom: 5px;
  width: 16px;
  height: 16px;
  border: 1px solid #b9776a;
  border-radius: 8px;
  background: #82230f;
  font-size: 11px;
  line-height: 14px;
  text-align: center;
`;

const EndLine = styled.span`
  width: 1px;
  height: 40px;
  background: #7a564c;
`;

const Chrome = () => (
  <svg width="24" height="24" viewBox="0 0 24 24">
    <path d="M12 6h10.400A12 12 0 0 1 11.500 24L17.200 15z" fill="#fccb3f" />
    <path d="M1.600 6A12 12 0 0 0 11.500 24L17.200 15 12 18 6.800 15z" fill="#1fa15d" />
    <path d="M1.600 6L6.800 15V9L12 6h10.400A12 12 0 0 0 1.600 6z" fill="#dd4b3e" />
    <circle cx="12" cy="12" r="5.800" fill="#f1f1f1" />
    <circle cx="12" cy="12" r="4.500" fill="#4687f4" />
  </svg>
);

const Sublime = () => (
  <svg width="24" height="24" viewBox="0 0 24 24">
    <rect width="24" height="24" rx="1" fill="#4a4a4a" />
    <path d="M6 7.500L18 4v4.500L11 10.500l7 2v4L6 20v-4.500l7-2-7-2z" fill="#ff9800" />
  </svg>
);

const Folder = () => (
  <svg width="24" height="24" viewBox="0 0 24 24">
    <path d="M1 3h8l2 2h11v15H1z" fill="#e5a51b" />
    <path d="M1 6h21v15H1z" fill="#fdd567" />
    <path d="M5 21v-8h15v8h-4v-4H9v4z" fill="#3b97dc" />
  </svg>
);

const Bee = () => (
  <svg width="26" height="24" viewBox="0 0 26 24">
    <path d="M11 1.500C15 0 20 2 21 6c2 4 2 8-1 12-4 4-10 3.500-13 1-5 0-7-6-4-10 1-4 4-7 8-7.500z" fill="#0d0d0d" stroke="#d8d8d8" strokeWidth="1.200" />
    <path d="M11.500 12c2 1 2.500 4 1 7M16 11c2 1 2 5 0 8" stroke="#f1b81e" strokeWidth="2" fill="none" />
    <ellipse cx="15.500" cy="6.500" rx="4.500" ry="3.500" fill="#b9cdec" />
    <path d="M6 4l3-1 1 4-5 2z" fill="#8f8f8f" />
    <circle cx="6" cy="13" r="3.600" fill="#f4f4f4" />
    <circle cx="6.500" cy="13" r="1.500" fill="#111" />
    <circle cx="23" cy="18.500" r="1.600" fill="#111" stroke="#ddd" />
    <circle cx="20" cy="21" r="1.500" fill="#111" stroke="#ddd" />
  </svg>
);

const Notepad = () => (
  <svg width="24" height="24" viewBox="0 0 24 24">
    <path d="M8 2l14 1-4 19L1 17z" fill="#6fb4c8" />
    <path d="M9 3l11 1-6 14-10-3z" fill="#a9dbe5" />
    <path d="M6 12l11 2-2 7L1 17z" fill="#4f9db4" />
    <path d="M1 17l5-9 1 5z" fill="#33545e" />
    <path d="M20 4l2 1-1 16-7-1z" fill="#e6f1f1" />
    <path d="M8 2.500h14" stroke="#d7d7c8" strokeWidth="1.500" />
  </svg>
);

function SystemBar() {
  return (
    <Taskbar>
      <TaskButton aria-label="Start">
        <svg width="16" height="16" viewBox="0 0 16 16">
          <path d="M0 2.200L7 1.200v6.300H0zM8 1l8-1v7.500H8zM0 8.500h7v6.300l-7-1zM8 8.500h8V16l-8-1z" fill="#fff" />
        </svg>
      </TaskButton>
      <TaskButton aria-label="Search">
        <svg width="16" height="16" viewBox="0 0 16 16">
          <circle cx="10.500" cy="5.500" r="5" fill="none" stroke="#fff" strokeWidth="1.200" />
          <path d="M7 9L.500 15.500" stroke="#fff" strokeWidth="1.200" />
        </svg>
      </TaskButton>
      <TaskButton aria-label="Cortana">
        <svg width="16" height="16" viewBox="0 0 16 16">
          <circle cx="8" cy="8" r="6.800" fill="none" stroke="#fff" strokeWidth="2" />
        </svg>
      </TaskButton>
      <TaskButton aria-label="Task View">
        <svg width="17" height="16" viewBox="0 0 17 16">
          <path d="M1.500 0v3.500h9V0M1.500 16v-3.500h9V16M1.500 5.500h9v5h-9zM15.500 0v3M15.500 8v8" fill="none" stroke="#fff" />
          <path d="M14 4h3v3h-3z" fill="#fff" />
        </svg>
      </TaskButton>
      <OpenApps>
        <TaskButton $open aria-label="Sublime Text">
          <Sublime />
        </TaskButton>
        <TaskButton $open $active aria-label="Chrome">
          <Chrome />
        </TaskButton>
        <TaskButton $open aria-label="File Explorer">
          <Folder />
        </TaskButton>
        <TaskButton $open aria-label="Bee">
          <Bee />
        </TaskButton>
        <TaskButton $open aria-label="XAMPP">
          <Xampp size={24} />
        </TaskButton>
        <TaskButton $open aria-label="Notepad">
          <Notepad />
        </TaskButton>
      </OpenApps>
      <Tray>
        <IconButton $w={26} aria-label="Show hidden icons">
          <svg width="12" height="8">
            <path d="M.500 7L6 1.500 11.500 7" fill="none" stroke="#fff" strokeWidth="1.300" />
          </svg>
        </IconButton>
        <IconButton $w={24} aria-label="Network">
          <svg width="14" height="14" viewBox="0 0 14 14">
            <path
              d="M1 13A12 12 0 0 1 13 1.500M4 13a9 9 0 0 1 9-8.500M7 13a6 6 0 0 1 6-5.500"
              fill="none"
              stroke="#c9bab6"
              strokeWidth="1.100"
            />
            <circle cx="11.500" cy="12" r="1.500" fill="#fff" />
          </svg>
        </IconButton>
        <IconButton $w={24} aria-label="Battery">
          <svg width="16" height="12" viewBox="0 0 16 12">
            <path d="M5 2.500h9.500v7H4.500V7M15.500 4.500v3M1.500 0v3M4.500 0v3M3 6v5h2" fill="none" stroke="#fff" />
            <path d="M.500 2.500h5V5L4 6.500H2L.500 5zM6.500 4.500H11v3H6.500z" fill="#fff" />
          </svg>
        </IconButton>
        <IconButton $w={24} aria-label="Volume">
          <svg width="16" height="12" viewBox="0 0 16 12">
            <path d="M.500 4v4H3l3.500 3.500V.500L3 4zM8.500 4q1.500 2 0 4M10.500 2.500q3 3.500 0 7" fill="none" stroke="#fff" />
            <path d="M13 1q4 5 0 10" fill="none" stroke="#9a837d" />
          </svg>
        </IconButton>
        <IconButton $w={34} aria-label="Input language">
          ENG
        </IconButton>
        <Clock>
          09:55
          <br />
          04/09/2019
        </Clock>
        <Notices aria-label="Notifications">
          <svg width="16" height="16" viewBox="0 0 16 16">
            <path d="M0 0h16v12H7l-3 4v-4H0z" fill="#fff" />
            <path d="M3 3.500h10M3 6h10M3 8.500h10" stroke="#451b10" />
          </svg>
          <Count>3</Count>
        </Notices>
        <EndLine />
      </Tray>
    </Taskbar>
  );
}

const leftTabs: TabInfo[] = [
  { title: "Rhem", icon: <Globe color="#6b6b6e" ink="#5f281a" /> },
  { title: "Rhem", icon: <Xampp /> },
  { title: "local", icon: <PhpMyAdmin /> },
  { title: "Rhem", icon: <Xampp /> },
  { title: "(3) W", icon: <WhatsApp /> },
  { title: "Welc", icon: <Portal /> },
  { title: "C", icon: <CccLogo />, active: true, closable: true },
];

const rightTabs: TabInfo[] = [
  { title: "Generate a Random Name - Fa", icon: <FngLogo />, active: true, closable: true },
  { title: "Social Security Numbers Onlin", icon: <EagleLogo />, closable: true },
];

export default function App() {
  return (
    <>
      <GlobalStyle />
      <Desktop>
        <Windows>
          <Window $front>
            <Tabs front tabs={leftTabs} />
            <Nav front url="openccc.net/uPortal/p/Acco..." host={79} />
            <Bookmarks front />
            <Viewport>
              <AccountPage />
              <ScrollBar parts={[302, 212, 76]} />
            </Viewport>
          </Window>
          <Window>
            <Tabs tabs={rightTabs} />
            <Nav url="fakenamegenerator.com" host={300} />
            <Bookmarks />
            <Viewport>
              <NamePane>
                <FakeNamePage />
                <ScrollBar row parts={[0, 568, 64]} />
              </NamePane>
              <SideColumn>
                <SideTrack>
                  <ScrollBar parts={[56, 137, 380]} />
                </SideTrack>
                <SideCorner />
              </SideColumn>
            </Viewport>
          </Window>
        </Windows>
        <SystemBar />
      </Desktop>
    </>
  );
}
